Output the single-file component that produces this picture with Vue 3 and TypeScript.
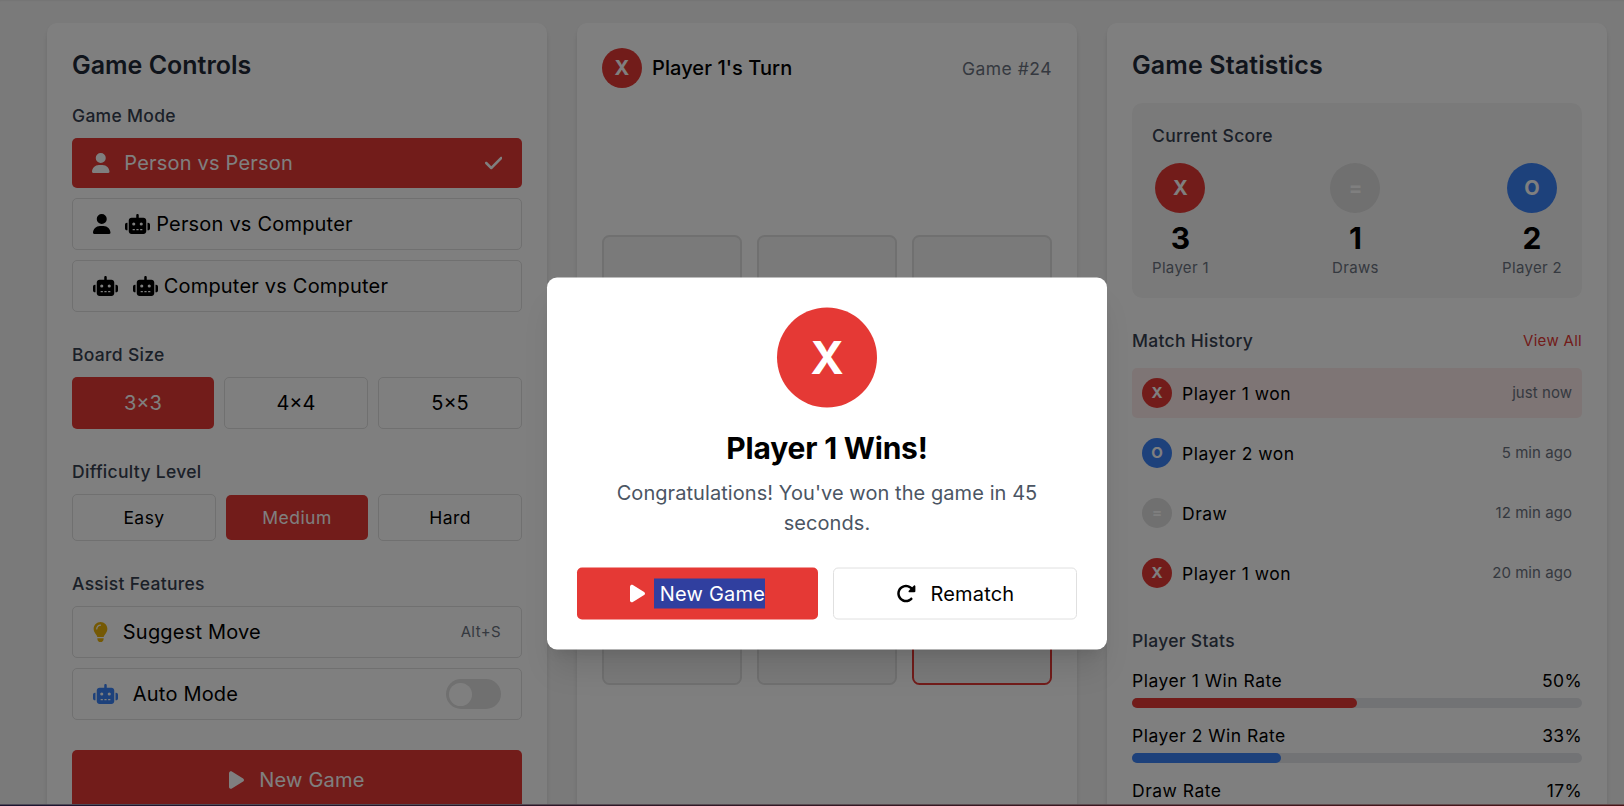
<script setup lang="ts">
import { ref } from 'vue'

type IconName = 'user' | 'robot' | 'check' | 'bulb' | 'play' | 'redo'
type Mark = 'X' | 'O' | '='

const icons: Record<IconName, { w: number; d: string }> = {
  user: {
    w: 448,
    d: 'M224 256A128 128 0 1 0 224 0a128 128 0 1 0 0 256zm-45.7 48C79.8 304 0 383.8 0 482.3C0 498.7 13.3 512 29.7 512H418.3c16.4 0 29.7-13.3 29.7-29.7C448 383.8 368.2 304 269.7 304H178.3z',
  },
  robot: {
    w: 640,
    d: 'M320 0c17.7 0 32 14.3 32 32V96H472c39.8 0 72 32.2 72 72V440c0 39.8-32.2 72-72 72H168c-39.8 0-72-32.2-72-72V168c0-39.8 32.2-72 72-72H288V32c0-17.7 14.3-32 32-32zM208 384c-8.8 0-16 7.2-16 16s7.2 16 16 16h32c8.8 0 16-7.2 16-16s-7.2-16-16-16H208zm96 0c-8.8 0-16 7.2-16 16s7.2 16 16 16h32c8.8 0 16-7.2 16-16s-7.2-16-16-16H304zm96 0c-8.8 0-16 7.2-16 16s7.2 16 16 16h32c8.8 0 16-7.2 16-16s-7.2-16-16-16H400zM264 256a40 40 0 1 0 -80 0 40 40 0 1 0 80 0zm152 40a40 40 0 1 0 0-80 40 40 0 1 0 0 80zM48 224H64V416H48c-26.5 0-48-21.5-48-48V272c0-26.5 21.5-48 48-48zm544 0c26.5 0 48 21.5 48 48v96c0 26.5-21.5 48-48 48H576V224h16z',
  },
  check: {
    w: 448,
    d: 'M438.6 105.4c12.5 12.5 12.5 32.8 0 45.3l-256 256c-12.5 12.5-32.8 12.5-45.3 0l-128-128c-12.5-12.5-12.5-32.8 0-45.3s32.8-12.5 45.3 0L160 338.7 393.4 105.4c12.5-12.5 32.8-12.5 45.3 0z',
  },
  bulb: {
    w: 384,
    d: 'M272 384c9.6-31.9 29.5-59.1 49.2-86.2l0 0c5.2-7.1 10.4-14.2 15.4-21.4c19.8-28.5 31.4-63 31.4-100.3C368 78.8 289.2 0 192 0S16 78.8 16 176c0 37.3 11.6 71.9 31.4 100.3c5 7.2 10.2 14.3 15.4 21.4l0 0c19.8 27.1 39.7 54.4 49.2 86.2H272zM192 512c44.2 0 80-35.8 80-80V416H112v16c0 44.2 35.8 80 80 80zM112 176c0 8.8-7.2 16-16 16s-16-7.2-16-16c0-61.9 50.1-112 112-112c8.8 0 16 7.2 16 16s-7.2 16-16 16c-44.2 0-80 35.8-80 80z',
  },
  play: {
    w: 384,
    d: 'M73 39c-14.8-9.1-33.4-9.4-48.5-.9S0 62.6 0 80V432c0 17.4 9.4 33.4 24.5 41.9s33.7 8.1 48.5-.9L361 297c14.3-8.7 23-24.2 23-41s-8.7-32.2-23-41L73 39z',
  },
  redo: {
    w: 512,
    d: 'M463.5 224H472c13.3 0 24-10.7 24-24V72c0-9.7-5.8-18.5-14.8-22.2s-19.3-1.7-26.2 5.2L413.4 96.6c-87.6-86.5-228.7-86.2-315.8 1c-87.5 87.5-87.5 229.3 0 316.8s229.3 87.5 316.8 0c12.5-12.5 12.5-32.8 0-45.3s-32.8-12.5-45.3 0c-62.5 62.5-163.8 62.5-226.3 0s-62.5-163.8 0-226.3c62.2-62.2 162.7-62.5 225.3-1L327 183c-6.9 6.9-8.9 17.2-5.2 26.2s12.5 14.8 22.2 14.8H463.5z',
  },
}

const modes: { label: string; icons: IconName[] }[] = [
  { label: 'Person vs Person', icons: ['user'] },
  { label: 'Person vs Computer', icons: ['user', 'robot'] },
  { label: 'Computer vs Computer', icons: ['robot', 'robot'] },
]
const mode = ref(0)

const sizes = ['3×3', '4×4', '5×5']
const size = ref('3×3')

const levels = ['Easy', 'Medium', 'Hard']
const level = ref('Medium')

const markClass: Record<Mark, string> = { X: 'mark-x', O: 'mark-o', '=': 'mark-draw' }

const score: { mark: Mark; value: number; label: string }[] = [
  { mark: 'X', value: 3, label: 'Player 1' },
  { mark: '=', value: 1, label: 'Draws' },
  { mark: 'O', value: 2, label: 'Player 2' },
]

const matches: { mark: Mark; text: string; time: string }[] = [
  { mark: 'X', text: 'Player 1 won', time: 'just now' },
  { mark: 'O', text: 'Player 2 won', time: '5 min ago' },
  { mark: '=', text: 'Draw', time: '12 min ago' },
  { mark: 'X', text: 'Player 1 won', time: '20 min ago' },
]

const rates: { label: string; value: number; mark: Mark }[] = [
  { label: 'Player 1 Win Rate', value: 50, mark: 'X' },
  { label: 'Player 2 Win Rate', value: 33, mark: 'O' },
  { label: 'Draw Rate', value: 17, mark: '=' },
]
</script>

<template>
  <div class="page">
    <main class="columns">
      <section class="card">
        <h2>Game Controls</h2>

        <div class="group">
          <h3>Game Mode</h3>
          <div class="stack">
            <button
              v-for="(m, i) in modes"
              :key="m.label"
              class="option row"
              :class="{ active: mode === i }"
              @click="mode = i"
            >
              <span>
                <template v-for="(name, n) in m.icons" :key="n">
                  <svg class="icon" :class="{ lead: n === 0 }" :viewBox="`0 0 ${icons[name].w} 512`"><path :d="icons[name].d" /></svg>{{ ' ' }}
                </template>{{ m.label }}
              </span>
              <svg v-if="mode === i" class="icon" viewBox="0 0 448 512"><path :d="icons.check.d" /></svg>
            </button>
          </div>
        </div>

        <div class="group">
          <h3>Board Size</h3>
          <div class="trio sizes">
            <button v-for="s in sizes" :key="s" class="option" :class="{ active: size === s }" @click="size = s">{{ s }}</button>
          </div>
        </div>

        <div class="group">
          <h3>Difficulty Level</h3>
          <div class="trio centered">
            <button v-for="l in levels" :key="l" class="option small" :class="{ active: level === l }" @click="level = l">{{ l }}</button>
          </div>
        </div>

        <div class="group">
          <h3>Assist Features</h3>
          <div class="stack">
            <div class="option row">
              <span><svg class="icon lead yellow" viewBox="0 0 384 512"><path :d="icons.bulb.d" /></svg> Suggest Move</span>
              <span class="hint">Alt+S</span>
            </div>
            <div class="option row">
              <span><svg class="icon lead blue" viewBox="0 0 640 512"><path :d="icons.robot.d" /></svg> Auto Mode</span>
              <span class="toggle"><span class="knob"></span></span>
            </div>
          </div>
        </div>

        <button class="new-game"><svg class="icon lead" viewBox="0 0 384 512"><path :d="icons.play.d" /></svg> New Game</button>
      </section>

      <section class="card">
        <header class="turn">
          <span class="mark mark-x md">X</span>
          <span class="turn-name">Player 1's Turn</span>
          <span class="game-no">Game #24</span>
        </header>
        <div class="board">
          <div v-for="n in 9" :key="n" class="cell" :class="{ last: n === 9 }"></div>
        </div>
      </section>

      <section class="card">
        <h2 class="stats-heading">Game Statistics</h2>

        <div class="score">
          <h3>Current Score</h3>
          <div class="score-row">
            <div v-for="s in score" :key="s.label" class="score-item">
              <span class="mark lg" :class="markClass[s.mark]">{{ s.mark }}</span>
              <strong>{{ s.value }}</strong>
              <small>{{ s.label }}</small>
            </div>
          </div>
        </div>

        <div class="group">
          <div class="history-head">
            <h3>Match History</h3>
            <a>View All</a>
          </div>
          <div class="stack">
            <div v-for="(h, i) in matches" :key="i" class="match" :class="{ recent: i === 0 }">
              <span class="mark sm" :class="markClass[h.mark]">{{ h.mark }}</span>
              <span class="match-text">{{ h.text }}</span>
              <time>{{ h.time }}</time>
            </div>
          </div>
        </div>

        <h3 class="stats-title">Player Stats</h3>
        <div v-for="r in rates" :key="r.label" class="rate">
          <div class="rate-head"><span>{{ r.label }}</span><span class="rate-value">{{ r.value }}%</span></div>
          <div class="track"><div class="fill" :class="markClass[r.mark]" :style="{ width: r.value + '%' }"></div></div>
        </div>
      </section>
    </main>

    <div class="overlay">
      <div class="modal">
        <span class="mark mark-x xl">X</span>
        <h1>Player 1 Wins!</h1>
        <p>Congratulations! You've won the game in 45 seconds.</p>
        <div class="actions">
          <button class="option active"><svg class="icon lead" viewBox="0 0 384 512"><path :d="icons.play.d" /></svg><span class="selected">&nbsp;New Game</span></button>
          <button class="option"><svg class="icon lead" viewBox="0 0 512 512"><path :d="icons.redo.d" /></svg> Rematch</button>
        </div>
      </div>
    </div>
    <div class="bottom-edge"></div>
  </div>
</template>

<style>
body {
  overflow: hidden;
}
</style>

<style scoped>
.page,
.page * {
  box-sizing: border-box;
}
.page {
  position: relative;
  height: 806px;
  overflow: hidden;
  background: #f5f5f5;
  box-shadow: inset 0 2px 2px -1px rgba(0, 0, 0, 0.06);
  color: #000;
  font: 20px/30px Inter, sans-serif;
}
h1,
h2,
h3,
p {
  margin: 0;
}
button {
  margin: 0;
  font: inherit;
  letter-spacing: inherit;
  color: inherit;
  background: none;
  border: 0;
}
.columns {
  display: grid;
  grid-template-columns: repeat(3, 500px);
  gap: 30px;
  padding: 23px 0 0 47px;
}
.card {
  height: 900px;
  padding: 25px;
  background: #fff;
  border-radius: 10px;
  box-shadow: 0 5px 7.5px -1px rgba(0, 0, 0, 0.1), 0 2.5px 5px -2px rgba(0, 0, 0, 0.1);
}
h2 {
  margin-bottom: 20px;
  font-size: 25px;
  line-height: 35px;
  font-weight: 600;
  color: #1f2937;
}
.stats-heading {
  letter-spacing: 0.12px;
}
h3 {
  margin-bottom: 10px;
  font-size: 17.5px;
  line-height: 25px;
  font-weight: 500;
  letter-spacing: 0.3px;
  color: #374151;
}
.group {
  margin-bottom: 30px;
}
.stack {
  display: flex;
  flex-direction: column;
  gap: 10px;
}
.option {
  padding: 10px 20px;
  border: 1px solid #e0e0e0;
  border-radius: 5px;
  letter-spacing: 0.2px;
}
.option.active {
  background: #e53935;
  color: #fff;
  border: 0;
}
.row {
  display: flex;
  align-items: center;
  justify-content: space-between;
  text-align: left;
}
.icon {
  height: 20px;
  fill: currentColor;
  vertical-align: -2.5px;
}
.row > .icon {
  flex: none;
}
.lead {
  margin-right: 9px;
}
.yellow {
  color: #eab308;
}
.blue {
  color: #3b82f6;
}
.trio {
  display: flex;
  gap: 10px;
}
.trio.centered {
  align-items: center;
}
.trio .option {
  flex: 1 1 0;
  text-align: center;
}
.sizes .option {
  letter-spacing: 0;
}
.option.small {
  font-size: 17.5px;
  line-height: 25px;
  letter-spacing: 0.45px;
}
.hint {
  font-size: 15px;
  line-height: 20px;
  letter-spacing: 0.4px;
  color: #6b7280;
}
.toggle {
  display: flex;
  width: 55px;
  height: 30px;
  padding: 3.75px 3px;
  border-radius: 15px;
  background: #e0e0e0;
}
.knob {
  width: 23px;
  height: 23px;
  border-radius: 50%;
  background: #fff;
}
.new-game {
  width: 100%;
  padding: 15px;
  border-radius: 5px;
  letter-spacing: 0.2px;
  background: #e53935;
  color: #fff;
}
.mark {
  display: flex;
  flex: none;
  align-items: center;
  justify-content: center;
  border-radius: 50%;
  color: #fff;
  font-weight: 700;
}
.mark-x {
  background: #e53935;
}
.mark-o {
  background: #3b82f6;
}
.mark-draw {
  background: #e0e0e0;
}
.sm {
  width: 30px;
  height: 30px;
  font-size: 15px;
  line-height: 20px;
}
.md {
  width: 40px;
  height: 40px;
}
.lg {
  width: 50px;
  height: 50px;
}
.xl {
  width: 100px;
  height: 100px;
  margin: 0 auto 20px;
  font-size: 45px;
  line-height: 50px;
}
.turn {
  display: flex;
  align-items: center;
  margin-bottom: 147px;
}
.turn-name {
  margin-left: 10px;
  font-weight: 500;
  letter-spacing: 0.08px;
}
.game-no {
  margin-left: auto;
  font-size: 17.5px;
  line-height: 25px;
  letter-spacing: 0.5px;
  color: #6b7280;
}
.board {
  display: grid;
  grid-template-columns: repeat(3, 140px);
  grid-auto-rows: 140px;
  gap: 15px;
}
.cell {
  background: #f5f5f5;
  border: 2px solid #e0e0e0;
  border-radius: 7.5px;
}
.cell.last {
  border-color: #e53935;
}
.score {
  margin-bottom: 30px;
  padding: 20px;
  background: #f5f5f5;
  border-radius: 10px;
}
.score h3 {
  margin-bottom: 15px;
}
.score-row {
  display: flex;
  justify-content: space-between;
}
.score-item {
  display: flex;
  flex-direction: column;
  align-items: center;
}
.score-item strong {
  margin-top: 5px;
  font-size: 30px;
  line-height: 40px;
  font-weight: 700;
}
.score-item small {
  font-size: 15px;
  line-height: 20px;
  letter-spacing: 0.32px;
  color: #6b7280;
}
.history-head {
  display: flex;
  align-items: center;
  justify-content: space-between;
  margin-bottom: 15px;
}
.history-head h3 {
  margin: 0;
}
.history-head a {
  font-size: 15px;
  line-height: 20px;
  letter-spacing: 0.3px;
  color: #e53935;
}
.match {
  display: flex;
  align-items: center;
  padding: 10px;
  border-radius: 5px;
}
.match.recent {
  background: rgba(229, 57, 53, 0.1);
}
.match-text {
  margin-left: 10px;
  font-size: 17.5px;
  line-height: 25px;
  letter-spacing: 0.5px;
}
.match time {
  margin-left: auto;
  font-size: 15px;
  line-height: 20px;
  letter-spacing: 0.05px;
  color: #6b7280;
}
.stats-title {
  margin-bottom: 15px;
}
.rate {
  margin-bottom: 15px;
}
.rate-head {
  display: flex;
  justify-content: space-between;
  margin-bottom: 5px;
  font-size: 17.5px;
  line-height: 25px;
  letter-spacing: 0.5px;
}
.rate-value {
  letter-spacing: 0.35px;
}
.track {
  height: 10px;
  border-radius: 5px;
  background: #e5e7eb;
}
.fill {
  height: 100%;
  border-radius: 5px;
}
.overlay {
  position: absolute;
  inset: 0;
  display: flex;
  align-items: flex-start;
  justify-content: center;
  padding: 277px 0 0 30px;
  background: rgba(0, 0, 0, 0.5);
}
.modal {
  width: 560px;
  padding: 30px;
  background: #fff;
  border-radius: 10px;
  text-align: center;
  transform: translateY(0.5px);
  box-shadow: 0 25px 31px -6px rgba(0, 0, 0, 0.1), 0 10px 12.5px -7.5px rgba(0, 0, 0, 0.1);
}
.modal h1 {
  margin-bottom: 10px;
  font-size: 30px;
  line-height: 40px;
  font-weight: 700;
  letter-spacing: -0.2px;
}
.modal p {
  margin-bottom: 30px;
  letter-spacing: 0.07px;
  color: #4b5563;
}
.actions {
  display: grid;
  grid-template-columns: 241px 244px;
  gap: 15px;
}
.selected {
  display: inline-block;
  background: #303f9f;
}
.bottom-edge {
  position: absolute;
  left: 0;
  right: 0;
  bottom: 0;
  height: 2px;
  border-top: 1px solid rgba(128, 128, 128, 0.5);
  background: linear-gradient(90deg, #1c1430, #341824 50%, #4a1518);
}
</style>
